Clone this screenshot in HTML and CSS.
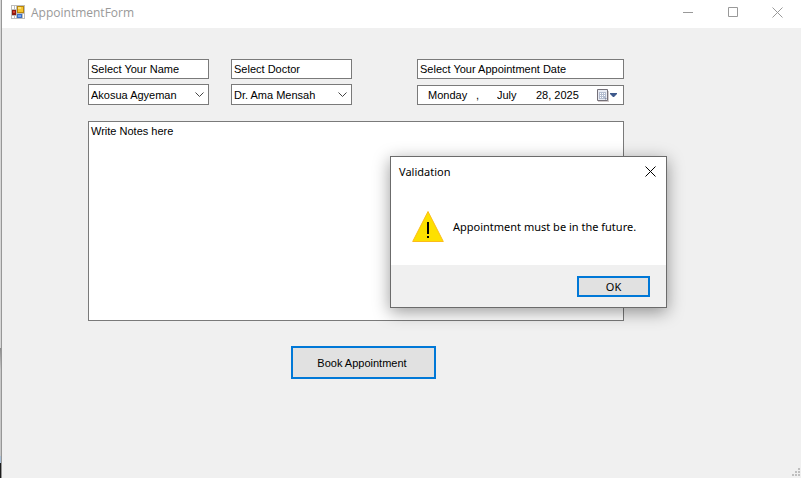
FILE: index.html
```html
<!DOCTYPE html>
<html lang="en">
<head>
<meta charset="utf-8">
<title>AppointmentForm</title>
<link rel="stylesheet" href="styles.css">
</head>
<body>
<div class="backdrop" aria-hidden="true"><span class="backdrop-light"></span><span class="backdrop-mid"></span><span class="backdrop-blue"></span><span class="backdrop-dark"></span></div>
<div class="window">
  <header class="titlebar">
    <svg class="app-icon" width="14" height="14" viewBox="0 0 14 14" shape-rendering="crispEdges" aria-hidden="true">
      <path fill="#bdbdbd" d="M0 0h14v14H0z"/>
      <path fill="#fff" d="M1 1h2v3H1zM4 1h1v3H4zM1 11h2v2H1zM4 11h1v2H4z"/>
      <path fill="#8e1b12" d="M1 5h4v5H1z"/>
      <path fill="#d8402f" d="M2 6h2v2H2z"/>
      <path fill="#b8860b" d="M6 1h7v7H6z"/>
      <path fill="#f7c530" d="M7 2h5v5H7z"/>
      <path fill="#fbe07a" d="M7 2h3v2H7z"/>
      <path fill="#3c6fc4" d="M6 9h5v4H6z"/>
      <path fill="#76a5f0" d="M7 10h3v2H7z"/>
      <path fill="#fff" d="M12 9h1v4h-1z"/>
    </svg>
    <h1 class="title">AppointmentForm</h1>
    <div class="window-buttons">
      <button type="button" class="window-button" aria-label="Minimize"><svg width="10" height="10" viewBox="0 0 10 10"><path d="M0 5.500h10"/></svg></button>
      <button type="button" class="window-button" aria-label="Maximize"><svg width="10" height="10" viewBox="0 0 10 10"><path d="M.5.500h9v9h-9z"/></svg></button>
      <button type="button" class="window-button" aria-label="Close"><svg width="11" height="11" viewBox="0 0 11 11"><path d="M.5.500l10 10M10.500.500l-10 10"/></svg></button>
    </div>
  </header>
  <form class="form">
    <div class="fields">
      <div class="field">
        <input class="box" type="text" value="Select Your Name" aria-label="Name caption">
        <div class="combo">
          <select class="box" aria-label="Your name"><option>Akosua Agyeman</option></select>
          <svg class="chevron" width="9" height="6" viewBox="0 0 9 6" aria-hidden="true"><path d="M.5.500l4 4 4-4"/></svg>
        </div>
      </div>
      <div class="field">
        <input class="box" type="text" value="Select Doctor" aria-label="Doctor caption">
        <div class="combo">
          <select class="box" aria-label="Doctor"><option>Dr. Ama Mensah</option></select>
          <svg class="chevron" width="9" height="6" viewBox="0 0 9 6" aria-hidden="true"><path d="M.5.500l4 4 4-4"/></svg>
        </div>
      </div>
      <div class="field field-date">
        <input class="box" type="text" value="Select Your Appointment Date" aria-label="Date caption">
        <div class="box date" role="group" aria-label="Appointment date">
          <input class="part weekday" type="text" value="Monday" aria-label="Weekday">
          <span class="comma">,</span>
          <input class="part month" type="text" value="July" aria-label="Month">
          <input class="part day" type="text" value="28, 2025" aria-label="Day and year">
          <button type="button" class="calendar" aria-label="Open calendar">
            <svg width="21" height="13" viewBox="0 0 21 13">
              <path fill="#d3cccc" d="M1 2h11v11H1z"/>
              <path fill="#e9ebf3" stroke="#747078" d="M.5.500h10v11H.5z"/>
              <path fill="#b3bccf" d="M2 3h7v7H2z"/>
              <path fill="#fff" d="M3 4h1v1H3zM5 4h1v1H5zM7 4h1v1H7zM3 6h1v1H3zM5 6h1v1H5zM7 6h1v1H7zM3 8h1v1H3zM5 8h1v1H5z"/>
              <path fill="#8890a4" d="M8 11V9h2z"/>
              <path fill="#3f5a8c" d="M13 4h7v1l-3 3h-1l-3-3z"/>
            </svg>
          </button>
        </div>
      </div>
    </div>
    <textarea class="box notes" aria-label="Notes">Write Notes here</textarea>
    <button type="button" class="push book">Book Appointment</button>
  </form>
  <svg class="grip" width="8" height="8" viewBox="0 0 8 8" aria-hidden="true"><path fill="#bfbfbf" d="M6 0h2v2H6zM3 3h2v2H3zM6 3h2v2H6zM0 6h2v2H0zM3 6h2v2H3zM6 6h2v2H6z"/></svg>
</div>
<section class="dialog" role="dialog" aria-labelledby="dialog-title">
  <header class="dialog-head">
    <h2 class="dialog-title" id="dialog-title">Validation</h2>
    <button type="button" class="dialog-close" aria-label="Close"><svg width="11" height="11" viewBox="0 0 11 11"><path d="M.5.500l10 10M10.500.500l-10 10"/></svg></button>
  </header>
  <div class="dialog-body">
    <svg class="warning" width="32" height="32" viewBox="0 0 32 32" aria-hidden="true">
      <path fill="#fde000" stroke="#fcbc1a" d="M16 .5L31.300 30.500H.7z"/>
      <path fill="#000" d="M15 11h2v12h-2zM15 25h2v2h-2z"/>
    </svg>
    <p class="message">Appointment must be in the future.</p>
  </div>
  <footer class="dialog-foot"><button type="button" class="push ok">OK</button></footer>
</section>
</body>
</html>
```
FILE: styles.css
```css
* { box-sizing: border-box; }

body {
  margin: 0;
  min-height: 100vh;
  display: flex;
  position: relative;
  overflow: hidden;
  background: #f0f0f0;
  color: #000;
  font: 11px/16px "Liberation Sans", Arial, sans-serif;
}

input, select, textarea, button { font: inherit; color: inherit; border-radius: 0; margin: 0; }
h1, h2, p { margin: 0; font-weight: 400; }
svg { display: block; }

/* Sliver of the desktop behind the window */
.backdrop { width: 2px; display: flex; flex-direction: column; border-right: 1px solid #979797; }
.backdrop-light { flex: 348; background: #d6d6d6; }
.backdrop-mid { flex: 108; background: linear-gradient(#8c8c8c, #c8c8c8 20%); }
.backdrop-blue { flex: 7; background: #a9bfd6; }
.backdrop-dark { flex: 15; background: #1c1c1c; }

.window { flex: 1; position: relative; }

.titlebar {
  height: 28px;
  padding: 0 1px 0 9px;
  display: flex;
  align-items: flex-start;
  background: #fff;
  color: #999;
}
.app-icon { margin-top: 5px; }
.title { margin: 5px auto 0 6px; font: 12px/16px "Open Sans", "Segoe UI", sans-serif; }
.window-buttons { display: flex; }
.window-button {
  width: 45px;
  height: 24px;
  padding: 0;
  border: 0;
  background: none;
  display: grid;
  place-items: center;
}
.window-button svg { fill: none; stroke: #999; }

.form {
  padding: 31px 177px 0 86px;
  display: flex;
  flex-direction: column;
}
.fields { display: grid; grid-template-columns: 121fr 121fr 250fr; column-gap: 22px; }
.field { display: flex; flex-direction: column; gap: 5px; min-width: 0; }
.field-date { margin-left: 43px; gap: 6px; }

.box {
  width: 100%;
  height: 20px;
  padding: 0 2px;
  border: 1px solid #7a7a7a;
  background: #fff;
  outline: 0;
}
.combo { position: relative; }
.combo .box { display: block; height: 21px; appearance: none; }
.chevron { position: absolute; right: 5px; top: 8px; fill: none; stroke: #444; pointer-events: none; }

.date { display: flex; align-items: center; padding: 0 5px 0 10px; }
.part { padding: 0; border: 0; background: none; outline: 0; height: 16px; }
.weekday { width: 48px; }
.comma { width: 21px; }
.month { width: 39px; }
.day { width: 48px; }
.calendar { margin-left: auto; padding: 0; border: 0; background: none; }

.notes { height: 200px; margin-top: 16px; padding: 1px 2px; resize: none; display: block; }

.push { border: 2px solid #0078d7; background: #e1e1e1; padding: 0; }
.book { width: 145px; height: 33px; margin: 25px 0 0 203px; padding-right: 3px; }

.grip { position: absolute; right: 1px; bottom: 2px; }

.dialog {
  position: absolute;
  left: 390px;
  top: 156px;
  width: 277px;
  border: 1px solid #6b6b6b;
  background: #fff;
  box-shadow: 0 4px 16px rgba(0, 0, 0, .4);
  font: 11px/16px "Noto Sans", "Segoe UI", sans-serif;
}
.dialog-head { height: 29px; padding: 0 10px 0 8px; display: flex; align-items: center; justify-content: space-between; }
.dialog-title { font-size: 11px; }
.dialog-close { border: 0; padding: 0; background: none; }
.dialog-close svg { fill: none; stroke: #000; }
.dialog-body { height: 79px; padding: 2px 21px 0; display: flex; align-items: center; gap: 9px; }
.warning { flex: none; }
.message { white-space: nowrap; }
.dialog-foot { padding: 11px 16px 10px; display: flex; justify-content: flex-end; background: #f0f0f0; }
.ok { width: 73px; height: 21px; line-height: 16px; }
```
